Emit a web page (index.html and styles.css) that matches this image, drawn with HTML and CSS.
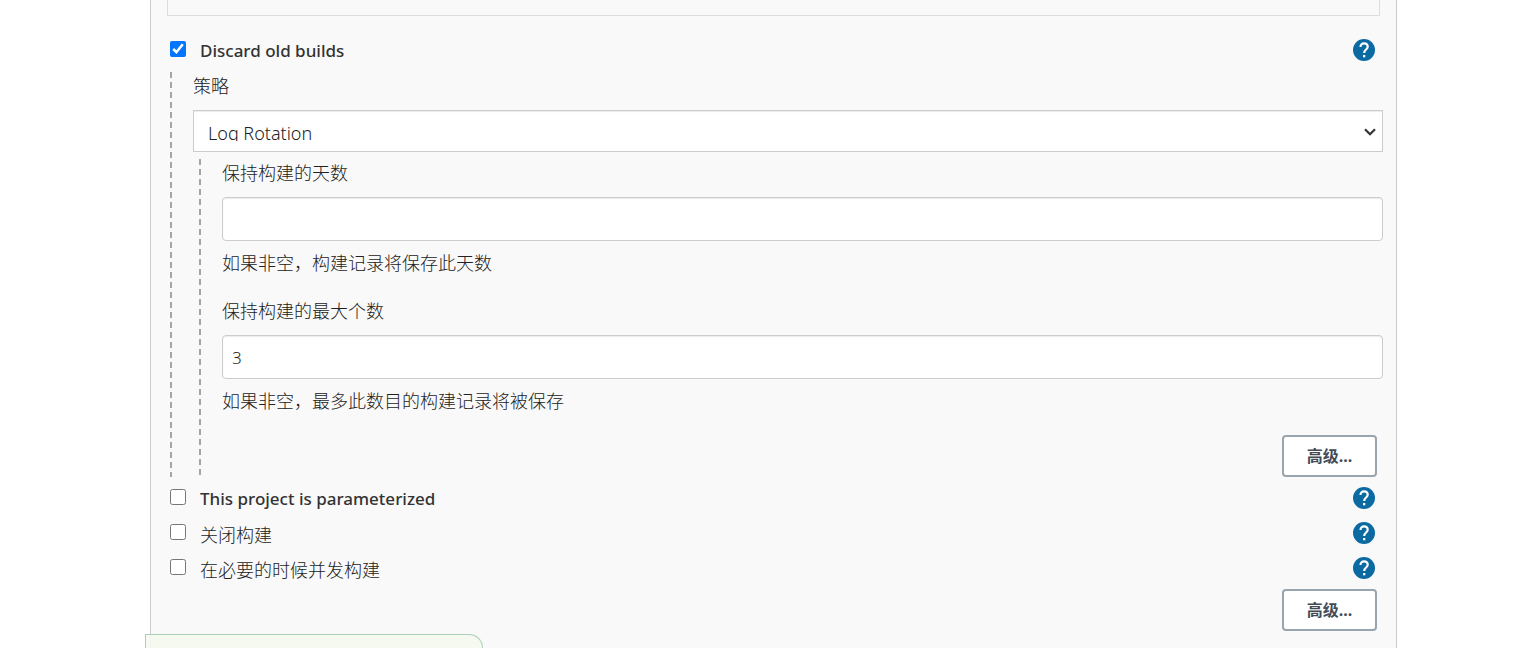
FILE: index.html
```html
<!DOCTYPE html>
<html lang="zh-CN">
<head>
<meta charset="utf-8">
<title>General</title>
<link rel="stylesheet" href="styles.css">
</head>
<body>
<svg class="sprite" aria-hidden="true">
  <symbol id="help" viewBox="0 0 24 24">
    <path d="M12 1a11 11 0 1 0 0 22 11 11 0 0 0 0-22z" fill="#0b6aa2"/>
    <path d="M8.500 9.100C8.500 6.900 9.900 5.300 12 5.300s3.700 1.400 3.700 3.500c0 2.700-3.500 2.900-3.500 6.200" fill="none" stroke="#fff" stroke-width="2.200"/>
    <path d="M11 17h2.300v2.300H11z" fill="#fff"/>
  </symbol>
</svg>
<main class="panel">
  <div class="description-box"></div>
  <form class="config">
    <div class="option">
      <input class="check" type="checkbox" id="discard" checked>
      <label class="option-label" for="discard">Discard old builds</label>
      <button class="help" type="button" aria-label="Help"><svg viewBox="0 0 24 24"><use href="#help"/></svg></button>
    </div>
    <div class="nested">
      <label class="label" for="strategy">策略</label>
      <div class="select-wrap">
        <select class="select" id="strategy"><option>Log Rotation</option></select>
        <svg class="chevron" viewBox="0 0 12 8" aria-hidden="true"><path d="M1 1.200l5 5 5-5" fill="none" stroke="#333" stroke-width="2.200"/></svg>
      </div>
      <div class="nested nested-inner">
        <div class="field">
          <label class="label" for="days">保持构建的天数</label>
          <input class="text" type="text" id="days">
          <p class="hint">如果非空，构建记录将保存此天数</p>
        </div>
        <div class="field">
          <label class="label" for="count">保持构建的最大个数</label>
          <input class="text" type="text" id="count" value="3">
          <p class="hint">如果非空，最多此数目的构建记录将被保存</p>
        </div>
        <div class="actions"><button class="advanced" type="button">高级...</button></div>
      </div>
    </div>
    <div class="option">
      <input class="check" type="checkbox" id="params">
      <label class="option-label" for="params">This project is parameterized</label>
      <button class="help" type="button" aria-label="Help"><svg viewBox="0 0 24 24"><use href="#help"/></svg></button>
    </div>
    <div class="option">
      <input class="check" type="checkbox" id="disable">
      <label class="option-label plain" for="disable">关闭构建</label>
      <button class="help" type="button" aria-label="Help"><svg viewBox="0 0 24 24"><use href="#help"/></svg></button>
    </div>
    <div class="option">
      <input class="check" type="checkbox" id="concurrent">
      <label class="option-label plain" for="concurrent">在必要的时候并发构建</label>
      <button class="help" type="button" aria-label="Help"><svg viewBox="0 0 24 24"><use href="#help"/></svg></button>
    </div>
    <div class="actions last"><button class="advanced" type="button">高级...</button></div>
  </form>
</main>
<div class="save-bar"></div>
</body>
</html>
```
FILE: styles.css
```css
* { box-sizing: border-box; }
body {
  margin: 0;
  background: #fff;
  color: #222;
  font-family: "Noto Sans", "Noto Sans CJK SC", sans-serif;
  font-size: 18px;
  line-height: 24px;
}
.sprite { position: absolute; width: 0; height: 0; }
.panel {
  min-height: 100vh;
  margin: 0 142px 0 150px;
  padding: 0 16px;
  border: solid #ccc;
  border-width: 0 1px;
  background: #f9f9f9;
}
.description-box {
  height: 16px;
  border: 1px solid #ddd;
  border-top: 0;
}
.config { padding: 17px 0 16px 3px; }
.option {
  display: flex;
  align-items: center;
  gap: 14px;
  height: 35px;
}
.check {
  width: 16px;
  height: 16px;
  margin: 0 0 4px;
}
.option-label {
  flex: 1;
  color: #333;
  font-family: "Noto Sans", sans-serif;
  font-size: 17px;
  font-weight: 500;
}
.option-label.plain {
  color: #222;
  font-family: "Noto Sans CJK SC", sans-serif;
  font-size: 18px;
  font-weight: 300;
}
.help {
  width: 24px;
  height: 24px;
  margin: 0 4px 2px 0;
  padding: 0;
  border: 0;
  background: none;
}
.help svg { display: block; width: 24px; height: 24px; }
.nested {
  margin: 4px 0;
  padding-left: 23px;
  background: repeating-linear-gradient(#a5a5a5 0 6px, transparent 6px 10px) left top / 2px 100% no-repeat;
}
.select-wrap, .nested > .nested { margin-right: -3px; }
.label, .hint { display: block; margin: 0; font-weight: 300; }
.nested > .label { padding: 2px 0 12px; }
.select-wrap { position: relative; }
.select {
  display: block;
  width: 100%;
  height: 42px;
  padding: 10px 32px 10px 14px;
  border: 1px solid #ccc;
  border-radius: 0;
  appearance: none;
  background: #fff;
  box-shadow: inset 0 1px 1px rgba(0, 0, 0, .08);
  color: #222;
  font: 300 18px/24px "Noto Sans", sans-serif;
}
.chevron {
  position: absolute;
  top: 18px;
  right: 7px;
  width: 12px;
  height: 8px;
  pointer-events: none;
}
.nested .nested-inner { margin: 7px -3px 0 6px; }
.field { padding: 2px 0 22px; }
.text {
  display: block;
  width: 100%;
  height: 44px;
  margin: 12px 0 10px;
  padding: 0 9px;
  border: 1px solid #ccc;
  border-radius: 4px;
  background: #fff;
  box-shadow: inset 0 1px 1px rgba(0, 0, 0, .08);
  color: #222;
  font: 300 17px/24px "Noto Sans", sans-serif;
}
.actions { display: flex; justify-content: flex-end; padding-right: 6px; }
.actions.last { padding: 3px 3px 0 0; }
.advanced {
  width: 95px;
  height: 42px;
  padding: 0;
  border: 2px solid #98a5b0;
  border-radius: 4px;
  background: #fff;
  color: #444b55;
  font: 700 16px/24px "Noto Sans", "Noto Sans CJK SC", sans-serif;
}
.save-bar {
  position: fixed;
  bottom: 0;
  left: 145px;
  width: 338px;
  height: 14px;
  border: 1px solid #a9d0b8;
  border-bottom: 0;
  border-top-right-radius: 14px;
  background: rgba(245, 249, 239, .85);
}
```
